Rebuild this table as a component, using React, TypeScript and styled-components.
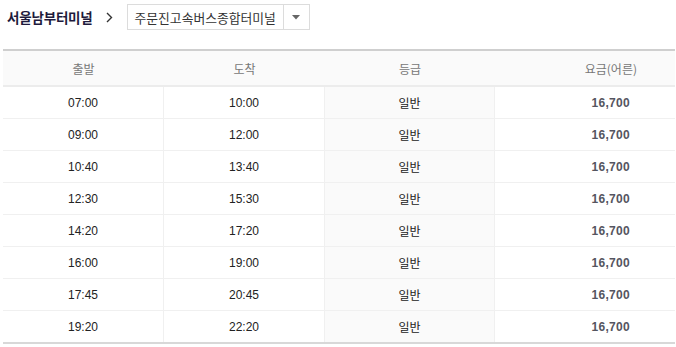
import styled, { createGlobalStyle } from "styled-components"

const Global = createGlobalStyle`
  body {
    margin: 0;
    background: #fff;
    font-family: "Liberation Sans", "Noto Sans CJK KR", sans-serif;
  }
`

const Page = styled.div`
  width: 676px;
  padding: 4px 1px 0 3px;
  box-sizing: border-box;
`

const Breadcrumb = styled.div`
  display: flex;
  align-items: center;
  height: 26px;
  margin-bottom: 19px;
`

const Terminal = styled.span`
  font-family: "Noto Sans CJK KR", sans-serif;
  font-weight: 700;
  font-size: 13.5px;
  color: #1e1a3c;
  padding-left: 4px;
  letter-spacing: -0.2px;
  white-space: nowrap;
`

const Chevron = styled.span`
  margin: 0 14px 0 13px;
  display: flex;
`

const Select = styled.div`
  display: flex;
  align-items: stretch;
  width: 183px;
  height: 26px;
  border: 1px solid #dcdcdc;
  box-sizing: border-box;
`

const SelectText = styled.span`
  flex: 1;
  font-family: "Noto Sans CJK KR", sans-serif;
  font-size: 12.8px;
  color: #333;
  display: flex;
  align-items: center;
  padding-left: 7px;
  white-space: nowrap;
  overflow: hidden;
  border-right: 1px solid #dcdcdc;
`

const SelectArrow = styled.span`
  width: 25px;
  display: flex;
  align-items: center;
  justify-content: center;
`

const Table = styled.div`
  width: 672px;
  border-top: 2px solid #cfcfcf;
  border-bottom: 2px solid #d8d8d8;
`

const cols = "161px 161px 170px 180px"

const HeadRow = styled.div`
  display: grid;
  grid-template-columns: ${cols};
  height: 34px;
  background: #fafafa;
  border-bottom: 2px solid #ececec;
`

const HeadCell = styled.div<{ $right?: boolean }>`
  display: flex;
  align-items: center;
  justify-content: ${(p) => (p.$right ? "flex-end" : "center")};
  padding-right: ${(p) => (p.$right ? "38px" : "0")};
  font-family: "Noto Sans CJK KR", sans-serif;
  font-size: 12px;
  color: #777;
`

const Row = styled.div<{ $last?: boolean }>`
  display: grid;
  grid-template-columns: ${cols};
  height: ${(p) => (p.$last ? "31px" : "32px")};
  box-sizing: border-box;
  border-bottom: ${(p) => (p.$last ? "none" : "1px solid #f0f0f0")};
`

const Cell = styled.div<{ $shade?: boolean; $fare?: boolean; $divider?: boolean }>`
  display: flex;
  align-items: center;
  justify-content: ${(p) => (p.$fare ? "flex-end" : "center")};
  padding-right: ${(p) => (p.$fare ? "45px" : "0")};
  background: ${(p) => (p.$shade ? "#fafafa" : "#fff")};
  border-right: ${(p) => (p.$divider ? "1px solid #f0f0f0" : "none")};
  font-size: 12px;
  color: ${(p) => (p.$fare ? "#555560" : "#222")};
  font-weight: ${(p) => (p.$fare ? 700 : 400)};
  letter-spacing: ${(p) => (p.$fare ? "0.3px" : "0")};
  font-family: ${(p) =>
    p.$shade ? `"Noto Sans CJK KR", sans-serif` : `"Liberation Sans", "Noto Sans CJK KR", sans-serif`};
`

const rows = [
  ["07:00", "10:00"],
  ["09:00", "12:00"],
  ["10:40", "13:40"],
  ["12:30", "15:30"],
  ["14:20", "17:20"],
  ["16:00", "19:00"],
  ["17:45", "20:45"],
  ["19:20", "22:20"],
]

export default function App() {
  return (
    <Page>
      <Global />
      <Breadcrumb>
        <Terminal>서울남부터미널</Terminal>
        <Chevron>
          <svg width="7" height="11" viewBox="0 0 7 11">
            <path d="M1 1 L5.5 5.5 L1 10" fill="none" stroke="#333" strokeWidth="1.4" />
          </svg>
        </Chevron>
        <Select>
          <SelectText>주문진고속버스종합터미널</SelectText>
          <SelectArrow>
            <svg width="8" height="5" viewBox="0 0 8 5">
              <path d="M0 0 H8 L4 4.5 Z" fill="#666" />
            </svg>
          </SelectArrow>
        </Select>
      </Breadcrumb>
      <Table>
        <HeadRow>
          <HeadCell>출발</HeadCell>
          <HeadCell>도착</HeadCell>
          <HeadCell>등급</HeadCell>
          <HeadCell $right>요금(어른)</HeadCell>
        </HeadRow>
        {rows.map(([dep, arr], i) => (
          <Row key={dep} $last={i === rows.length - 1}>
            <Cell $divider>{dep}</Cell>
            <Cell $divider>{arr}</Cell>
            <Cell $divider $shade>일반</Cell>
            <Cell $fare>16,700</Cell>
          </Row>
        ))}
      </Table>
    </Page>
  )
}
